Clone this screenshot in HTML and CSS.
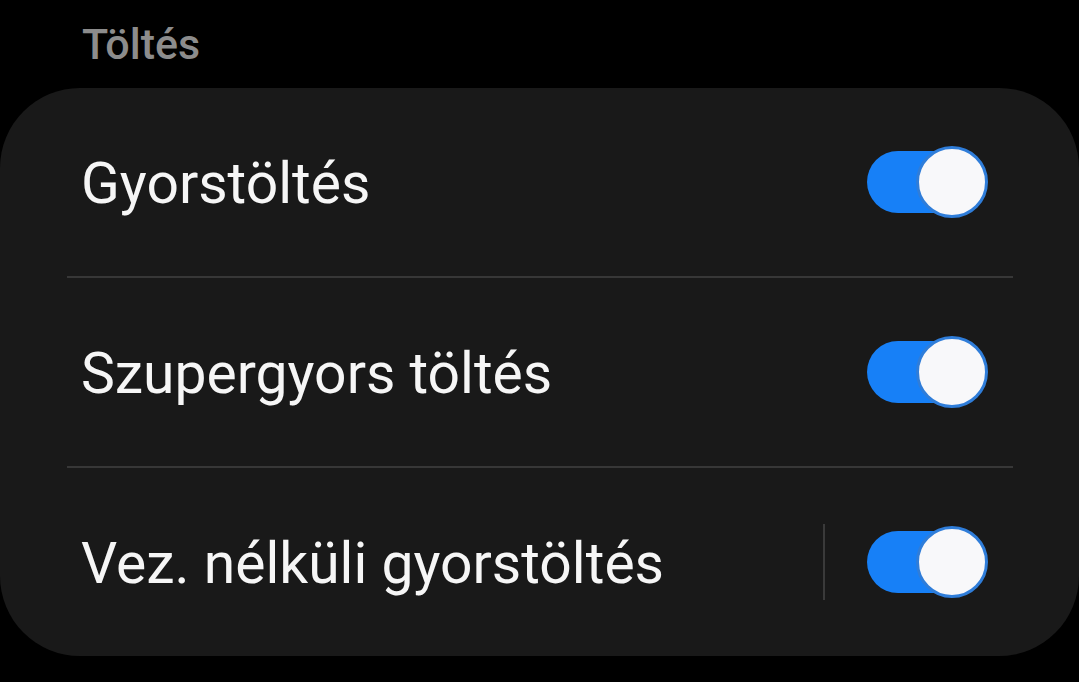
FILE: index.html
```html
<!DOCTYPE html>
<html lang="hu">
<head>
<meta charset="utf-8">
<title>Töltés</title>
<link rel="stylesheet" href="styles.css">
</head>
<body>
<div class="page">
  <div class="section-title">Töltés</div>
  <div class="card">
    <div class="row">
      <span class="label">Gyorstöltés</span>
      <div class="toggle"><span class="track"></span><span class="thumb"></span></div>
    </div>
    <div class="divider"></div>
    <div class="row">
      <span class="label">Szupergyors töltés</span>
      <div class="toggle"><span class="track"></span><span class="thumb"></span></div>
    </div>
    <div class="divider"></div>
    <div class="row">
      <span class="label">Vez. nélküli gyorstöltés</span>
      <span class="vline"></span>
      <div class="toggle"><span class="track"></span><span class="thumb"></span></div>
    </div>
  </div>
</div>
</body>
</html>
```
FILE: styles.css
```css
html, body {
  margin: 0;
  padding: 0;
  background: #000;
}
body {
  width: 1079px;
  height: 682px;
  overflow: hidden;
  font-family: Roboto, "Noto Sans", "Liberation Sans", sans-serif;
}
.page {
  display: flex;
  flex-direction: column;
}
.section-title {
  height: 88px;
  box-sizing: border-box;
  padding: 18px 0 0 82px;
  font-size: 43px;
  line-height: 52px;
  font-weight: 500;
  color: #8c8c8c;
}
.card {
  background: #191919;
  border-radius: 80px;
  display: flex;
  flex-direction: column;
}
.row {
  height: 188px;
  display: flex;
  align-items: center;
  padding: 0 91px 0 81px;
}
.label {
  flex: 1;
  font-size: 57px;
  color: #f6f6f6;
  line-height: 66px;
  padding-top: 4px;
}
.divider {
  height: 2px;
  background: #373737;
  margin: 0 66px 0 67px;
}
.vline {
  width: 2px;
  height: 76px;
  background: #3a3a3a;
  margin-right: 42px;
}
.toggle {
  position: relative;
  width: 121px;
  height: 72px;
}
.track {
  position: absolute;
  left: 0;
  top: 5px;
  width: 110px;
  height: 62px;
  border-radius: 31px;
  background: #1780f7;
}
.thumb {
  position: absolute;
  right: 0;
  top: 0;
  width: 66px;
  height: 66px;
  border-radius: 50%;
  background: #f8f8fa;
  border: 3px solid #2f7dd9;
}
```
